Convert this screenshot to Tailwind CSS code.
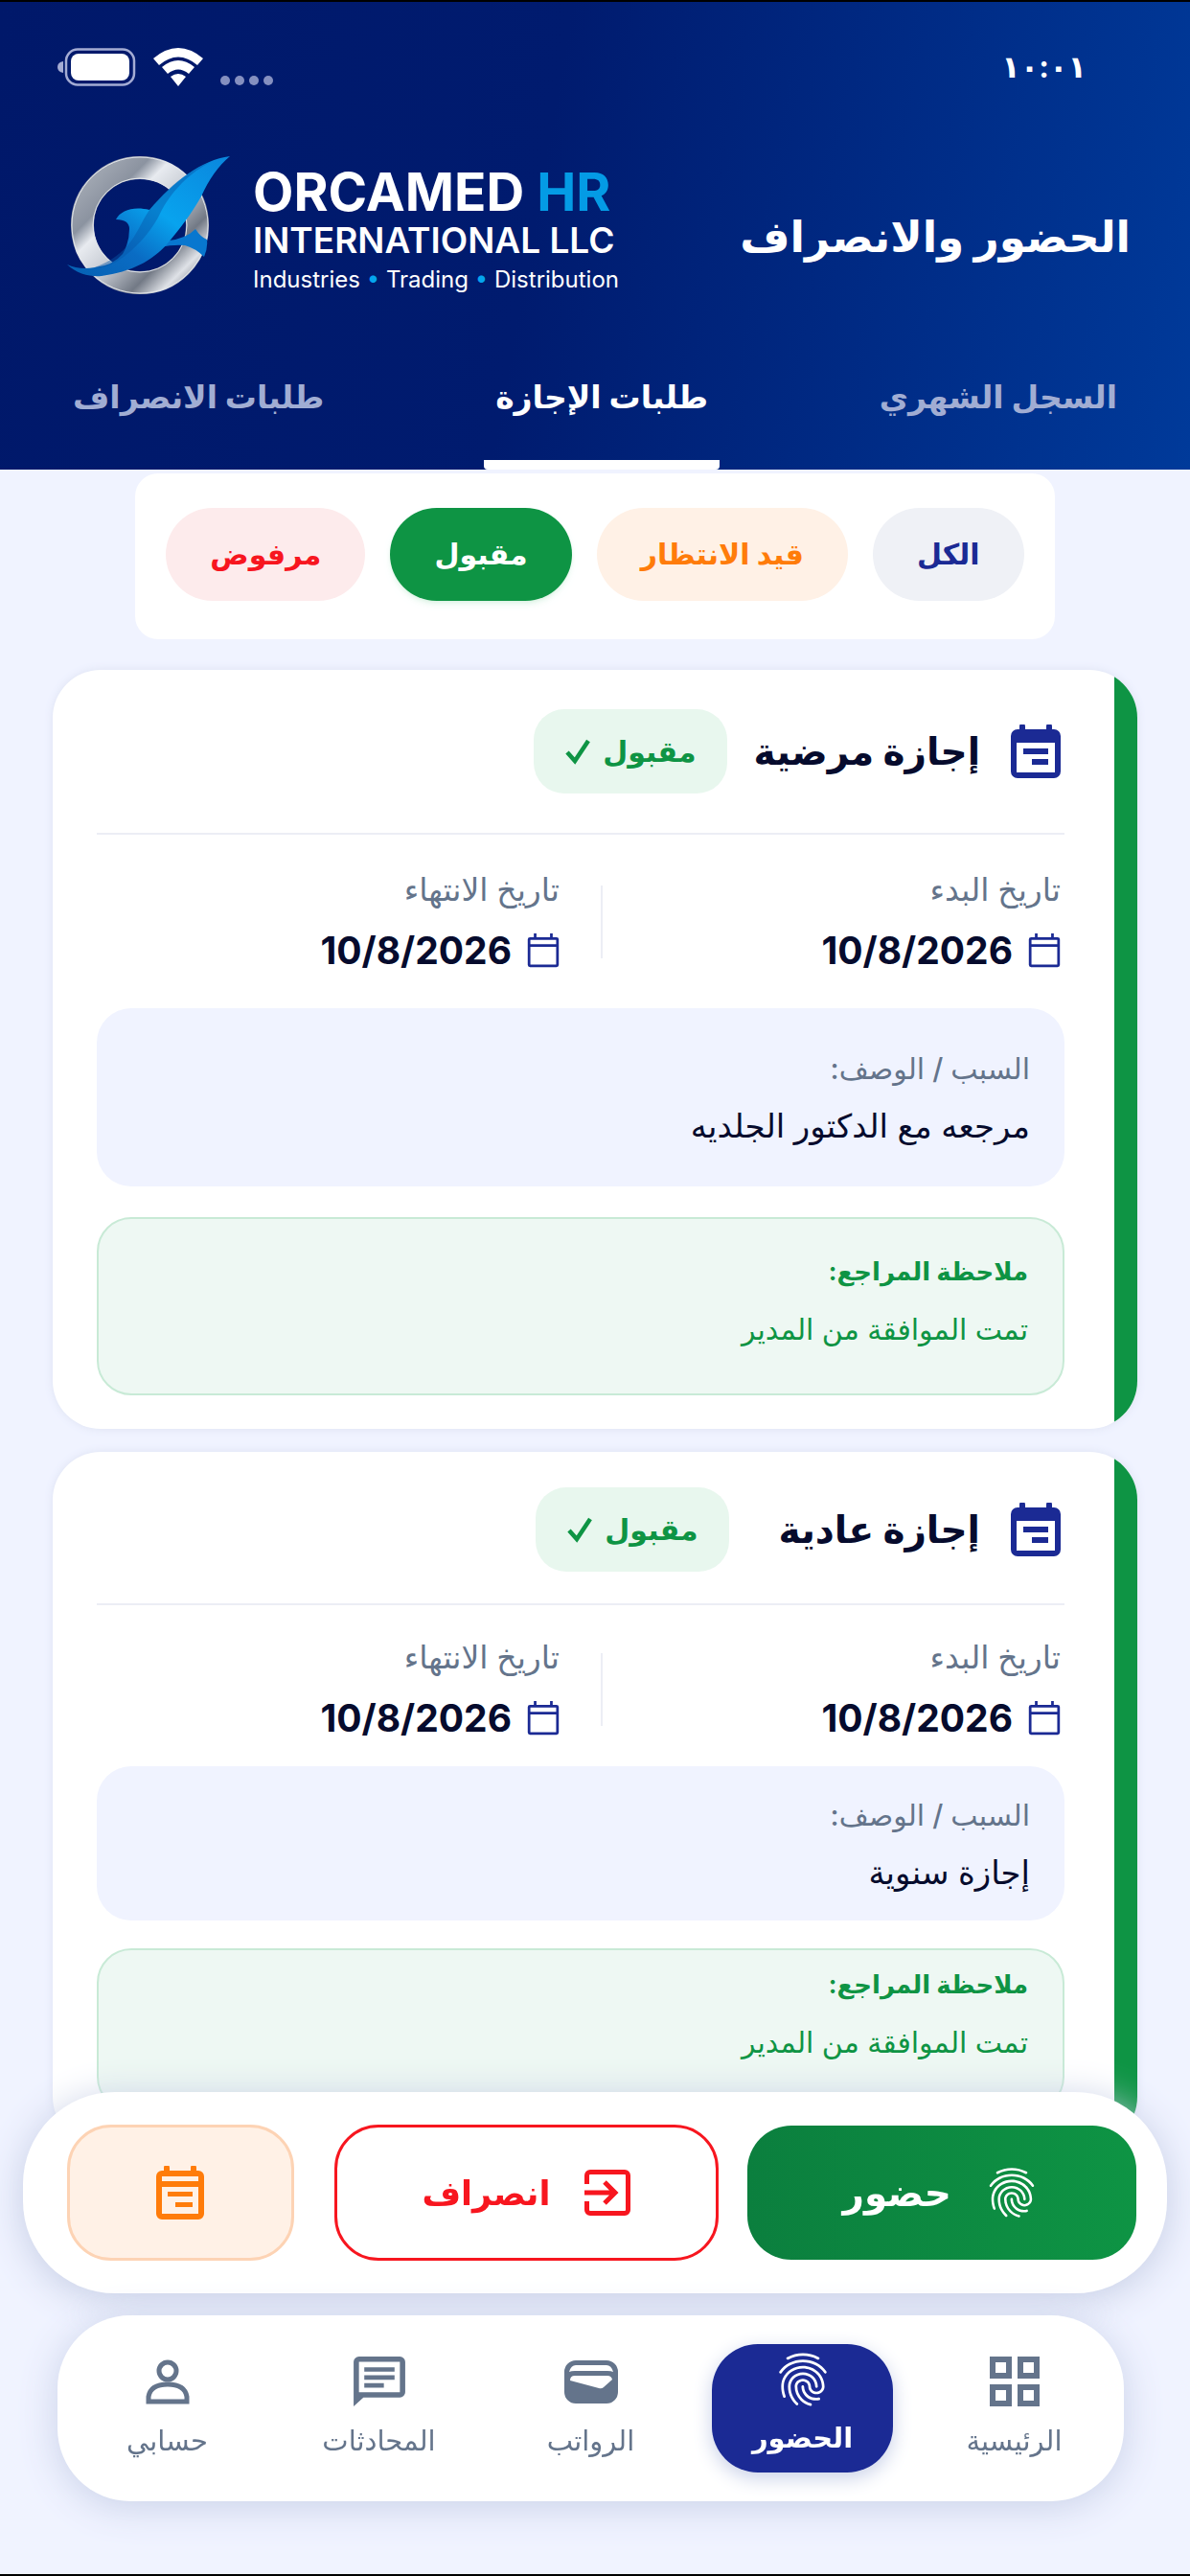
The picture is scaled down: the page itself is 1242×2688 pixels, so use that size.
<!DOCTYPE html>
<html lang="ar" dir="rtl">
<head>
  <meta charset="UTF-8">
  <meta name="viewport" content="width=device-width, initial-scale=1.0">
  <title>الحضور والانصراف</title>
  <script src="https://cdn.jsdelivr.net/npm/@tailwindcss/browser@4"></script>
</head>
<body class="min-h-screen bg-[#f0f3ff] font-['Inter','DejaVu_Sans',sans-serif] text-[#060b2d] border-y-2 border-black">

  <!-- Shared icons -->
  <svg class="hidden">
    <symbol id="finger" viewBox="0 0 24 24"><path d="M17.81 4.47c-.08 0-.16-.02-.23-.06C15.66 3.42 14 3 12.01 3c-1.98 0-3.86.47-5.57 1.41-.24.13-.54.04-.68-.2-.13-.24-.04-.55.2-.68C7.82 2.52 9.86 2 12.01 2c2.13 0 3.99.47 6.03 1.52.25.13.34.43.21.67-.09.18-.26.28-.44.28zM3.5 9.72c-.1 0-.2-.03-.29-.09-.23-.16-.28-.47-.12-.7.99-1.4 2.25-2.5 3.75-3.27C9.98 4.04 14 4.03 17.15 5.65c1.5.77 2.76 1.86 3.75 3.25.16.22.11.54-.12.7-.23.16-.54.11-.7-.12-.9-1.26-2.04-2.25-3.39-2.94-2.87-1.47-6.54-1.47-9.4.01-1.36.7-2.5 1.7-3.4 2.96-.08.14-.23.21-.39.21zm6.25 12.07c-.13 0-.26-.05-.35-.15-.87-.87-1.34-1.43-2.01-2.64-.69-1.23-1.05-2.73-1.05-4.34 0-2.97 2.54-5.39 5.66-5.39s5.66 2.42 5.66 5.39c0 .28-.22.5-.5.5s-.5-.22-.5-.5c0-2.42-2.09-4.39-4.66-4.39-2.57 0-4.66 1.97-4.66 4.39 0 1.44.32 2.77.93 3.85.64 1.15 1.08 1.64 1.85 2.42.19.2.19.51 0 .71-.11.1-.24.15-.37.15zm7.17-1.85c-1.19 0-2.24-.3-3.1-.89-1.49-1.01-2.38-2.65-2.38-4.39 0-.28.22-.5.5-.5s.5.22.5.5c0 1.41.72 2.74 1.94 3.56.71.48 1.54.71 2.54.71.24 0 .64-.03 1.04-.1.27-.05.53.13.58.41.05.27-.13.53-.41.58-.57.11-1.07.12-1.21.12zM14.91 22c-.04 0-.09-.01-.13-.02-1.59-.44-2.63-1.03-3.72-2.1-1.4-1.39-2.17-3.24-2.17-5.22 0-1.62 1.38-2.94 3.08-2.94 1.7 0 3.08 1.32 3.08 2.94 0 1.07.93 1.94 2.08 1.94s2.08-.87 2.08-1.94c0-3.77-3.25-6.83-7.25-6.83-2.84 0-5.44 1.58-6.61 4.03-.39.81-.59 1.76-.59 2.8 0 .78.07 2.01.67 3.61.1.26-.03.55-.29.64-.26.1-.55-.04-.64-.29-.49-1.31-.73-2.61-.73-3.96 0-1.2.23-2.29.68-3.24 1.33-2.79 4.28-4.6 7.51-4.6 4.55 0 8.25 3.51 8.25 7.83 0 1.62-1.38 2.94-3.08 2.94s-3.08-1.32-3.08-2.94c0-1.07-.93-1.94-2.08-1.94s-2.08.87-2.08 1.94c0 1.71.66 3.31 1.87 4.51.95.94 1.86 1.46 3.27 1.85.27.07.42.35.35.61-.05.23-.26.38-.47.38z"/></symbol>
    <symbol id="event" viewBox="0 0 52 56"><path fill-rule="evenodd" d="M9 2a3 3 0 0 1 6 0v3h22V2a3 3 0 0 1 6 0v3h2a7 7 0 0 1 7 7v37a7 7 0 0 1-7 7H7a7 7 0 0 1-7-7V12a7 7 0 0 1 7-7h2zM6 19v31h40V19zM13 25h26v6H13zM22 36h17v6H22z"/></symbol>
    <symbol id="cal" viewBox="0 0 32 34"><path d="M3 5h26a1 1 0 0 1 1 1v25a1 1 0 0 1-1 1H3a1 1 0 0 1-1-1V6a1 1 0 0 1 1-1zM2 12h28M8 0v5M24 0v5" fill="none" stroke="currentColor" stroke-width="2.6"/></symbol>
    <symbol id="check" viewBox="0 0 28 28"><path d="M3 15l8 9L25 3" fill="none" stroke="currentColor" stroke-width="4.500"/></symbol>
  </svg>

  <header class="bg-linear-[100deg,#00186a,#001b6f_45%,#003a9a] text-white">
    <div class="flex items-center justify-between h-[136px] pl-15 pr-27">
      <span class="text-[32px] font-bold">١٠:٠١</span>
      <div class="flex items-center gap-[18px]">
        <svg class="w-14 h-3 mt-7" viewBox="0 0 56 12" fill="#8590c0"><circle cx="5" cy="6" r="5"/><circle cx="20" cy="6" r="5"/><circle cx="35" cy="6" r="5"/><circle cx="50" cy="6" r="5"/></svg>
        <svg class="w-[52px] h-10" viewBox="0 0 52 40" fill="#fff"><path d="M0 11Q26-11 52 11l-6 7Q26 1 6 18zM9 20q17-14 34 0l-6 7q-11-9-22 0zM18 30q8-6 16 0l-8 10z"/></svg>
        <svg class="w-[82px] h-10" viewBox="0 0 82 40"><rect x="9" y="1.500" width="71" height="37" rx="12" fill="none" stroke="#a4acd4" stroke-width="2.500"/><rect x="14" y="6" width="61" height="28" rx="8" fill="#fff"/><path d="M6 14v12q-6-1-6-6t6-6z" fill="#a4acd4"/></svg>
      </div>
    </div>

    <div class="flex items-center justify-between mt-5 pl-[70px] pr-[62px]">
      <h1 class="mt-6 text-[45px] leading-16 font-bold">الحضور والانصراف</h1>
      <div class="flex items-center gap-6" dir="ltr">
        <svg class="w-[170px] h-[152px]" viewBox="0 0 170 152">
          <defs>
            <linearGradient id="metal" x1="0" y1="0" x2="1" y2="1"><stop offset="0" stop-color="#a9afb9"/><stop offset=".25" stop-color="#8b93a0"/><stop offset=".35" stop-color="#e8ebf0"/><stop offset=".55" stop-color="#c3c8d0"/><stop offset=".75" stop-color="#727985"/><stop offset=".88" stop-color="#dfe2e7"/><stop offset="1" stop-color="#80868f"/></linearGradient>
            <linearGradient id="fish" x1="1" y1="0" x2="0" y2="1"><stop offset="0" stop-color="#0a86dd"/><stop offset=".45" stop-color="#08a3ee"/><stop offset=".7" stop-color="#0a6cc4"/><stop offset="1" stop-color="#0560b2"/></linearGradient>
          </defs>
          <circle cx="76" cy="76" r="60" fill="none" stroke="url(#metal)" stroke-width="24"/>
          <circle cx="76" cy="76" r="71" fill="none" stroke="#e3e6eb" stroke-width="1"/>
          <circle cx="76" cy="76" r="49" fill="none" stroke="#e3e6eb" stroke-width="1"/>
          <path d="M106 92q18-2 28-12 5 8 12 11 1 9-3 18-9-9-20-12-12-1-26 2z" fill="#0877cf"/>
          <path d="M170 4C140 8 112 30 86 60 70 56 56 60 51 70q14 0 14 10 0 14-7 26-10 12-29 14-16 3-29-3C10 127 25 130 36 129 70 124 92 112 109 90 124 72 132 60 140 46 148 28 158 14 170 4z" fill="url(#fish)"/>
          <path d="M86 60C72 80 70 104 29 120 50 124 84 90 96 66 108 40 130 20 150 10 124 20 104 38 86 60z" fill="#0756a8" opacity=".45"/>
        </svg>
        <div class="flex flex-col pt-3">
          <span class="text-[55px] leading-[60px] font-bold">ORCAMED <span class="text-[#049be5]">HR</span></span>
          <span class="text-[37px] leading-[42px] font-semibold">INTERNATIONAL LLC</span>
          <span class="text-[24px] leading-10">Industries <span class="text-[#04a5ee]">•</span> Trading <span class="text-[#04a5ee]">•</span> Distribution</span>
        </div>
      </div>
    </div>

    <nav class="flex justify-between mt-[34px] px-[76px] text-[33px] leading-12 font-bold text-[#a1add3]">
      <a href="#" class="h-[144px] pt-11">السجل الشهري</a>
      <a href="#" class="h-[144px] pt-11 px-3 text-white border-b-10 border-white rounded-b-sm">طلبات الإجازة</a>
      <a href="#" class="h-[144px] pt-11">طلبات الانصراف</a>
    </nav>
  </header>

  <main class="flex flex-col items-center pt-1 px-[55px] pb-6">
    <div class="flex gap-[26px] bg-white rounded-3xl px-8 pt-9 pb-10 text-[30px] font-bold">
      <button class="h-[97px] px-[46px] rounded-full bg-[#eff1f6] text-[#1b2a94]">الكل</button>
      <button class="h-[97px] px-[46px] rounded-full bg-[#fff1e6] text-[#ff7c0a]">قيد الانتظار</button>
      <button class="h-[97px] px-[46px] rounded-full bg-[#0e9444] text-white shadow-md shadow-green-600/10">مقبول</button>
      <button class="h-[97px] px-[46px] rounded-full bg-[#fdebec] text-[#f7161f]">مرفوض</button>
    </div>

    <!-- Sick leave -->
    <article class="flex w-full mt-8 bg-white rounded-[50px] overflow-hidden shadow-[0_0_10px_#dde2f2]">
      <div class="w-6 bg-[#0e9444]"></div>
      <div class="flex-1 pl-[46px] pr-[52px] pb-[35px]">
        <div class="flex items-center h-[172px] border-b-2 border-[#eceef5]">
          <svg class="w-[52px] h-14 mr-1 text-[#1b2a94]" fill="currentColor"><use href="#event"/></svg>
          <h2 class="mr-8 text-[39px] font-bold">إجازة مرضية</h2>
          <span class="flex items-center gap-3 h-[88px] mr-7 px-8 rounded-[32px] bg-[#e8f7ee] text-[30px] font-bold text-[#0e9444]">مقبول <svg class="w-7 h-7"><use href="#check"/></svg></span>
        </div>
        <div class="flex items-center h-[181px] pr-1">
          <div class="w-[478px] flex flex-col gap-5">
            <span class="text-[33px] leading-10 text-[#64748b] font-medium">تاريخ البدء</span>
            <span class="flex items-center gap-4 text-[39px] leading-12 font-bold"><svg class="w-[34px] h-9 text-[#1b2a94]"><use href="#cal"/></svg>10/8/2026</span>
          </div>
          <div class="w-[45px] h-[76px] border-r-2 border-[#eceef5]"></div>
          <div class="flex flex-col gap-5">
            <span class="text-[33px] leading-10 text-[#64748b] font-medium">تاريخ الانتهاء</span>
            <span class="flex items-center gap-4 text-[39px] leading-12 font-bold"><svg class="w-[34px] h-9 text-[#1b2a94]"><use href="#cal"/></svg>10/8/2026</span>
          </div>
        </div>
        <div class="flex flex-col justify-center gap-3 h-[186px] px-9 rounded-[36px] bg-[#f0f3ff]">
          <p class="text-[30px] leading-12 text-[#64748b] font-medium">السبب / الوصف:</p>
          <p class="text-[34px] leading-12">مرجعه مع الدكتور الجلديه</p>
        </div>
        <div class="flex flex-col justify-center gap-3 h-[186px] mt-8 px-9 pb-3 rounded-[36px] border-2 border-[#c8ead6] bg-[#eef8f3] text-[#0e9444]">
          <p class="text-[26px] leading-12 font-bold">ملاحظة المراجع:</p>
          <p class="text-[30px] leading-12">تمت الموافقة من المدير</p>
        </div>
      </div>
    </article>

    <!-- Regular leave -->
    <article class="flex w-full mt-6 bg-white rounded-[50px] overflow-hidden shadow-[0_0_10px_#dde2f2]">
      <div class="w-6 bg-[#0e9444]"></div>
      <div class="flex-1 pl-[46px] pr-[52px] pb-[35px]">
        <div class="flex items-center h-[160px] pt-1 border-b-2 border-[#eceef5]">
          <svg class="w-[52px] h-14 mr-1 text-[#1b2a94]" fill="currentColor"><use href="#event"/></svg>
          <h2 class="mr-8 text-[39px] font-bold">إجازة عادية</h2>
          <span class="flex items-center gap-3 h-[88px] mr-13 px-8 rounded-[32px] bg-[#e8f7ee] text-[30px] font-bold text-[#0e9444]">مقبول <svg class="w-7 h-7"><use href="#check"/></svg></span>
        </div>
        <div class="flex items-center h-[168px] pt-2 pr-1">
          <div class="w-[478px] flex flex-col gap-5">
            <span class="text-[33px] leading-10 text-[#64748b] font-medium">تاريخ البدء</span>
            <span class="flex items-center gap-4 text-[39px] leading-12 font-bold"><svg class="w-[34px] h-9 text-[#1b2a94]"><use href="#cal"/></svg>10/8/2026</span>
          </div>
          <div class="w-[45px] h-[76px] border-r-2 border-[#eceef5]"></div>
          <div class="flex flex-col gap-5">
            <span class="text-[33px] leading-10 text-[#64748b] font-medium">تاريخ الانتهاء</span>
            <span class="flex items-center gap-4 text-[39px] leading-12 font-bold"><svg class="w-[34px] h-9 text-[#1b2a94]"><use href="#cal"/></svg>10/8/2026</span>
          </div>
        </div>
        <div class="flex flex-col justify-center gap-3 h-[161px] px-9 rounded-[36px] bg-[#f0f3ff]">
          <p class="text-[30px] leading-12 text-[#64748b] font-medium">السبب / الوصف:</p>
          <p class="text-[34px] leading-12">إجازة سنوية</p>
        </div>
        <div class="flex flex-col gap-3 h-[170px] mt-[29px] pt-3 px-9 rounded-[36px] border-2 border-[#c8ead6] bg-[#eef8f3] text-[#0e9444]">
          <p class="text-[26px] leading-12 font-bold">ملاحظة المراجع:</p>
          <p class="text-[30px] leading-12">تمت الموافقة من المدير</p>
        </div>
      </div>
    </article>
  </main>

  <div class="fixed bottom-0 inset-x-0 pb-[78px]">
    <div class="flex items-center mx-6 h-[210px] pr-8 pl-[46px] rounded-[96px] bg-white shadow-[0_6px_40px_#c5cde4]">
      <button class="flex flex-[410] items-center justify-center gap-8 h-[140px] rounded-[46px] bg-linear-to-r from-[#0b7f3e] to-[#0e9444] text-[39px] font-bold text-white">
        <svg class="w-[62px] h-[64px]" fill="currentColor"><use href="#finger"/></svg>حضور
      </button>
      <button class="flex flex-[400] items-center justify-center gap-9 h-[142px] mr-[30px] rounded-[46px] border-3 border-[#f7161f] text-[35px] font-bold text-[#f7161f]">
        <svg class="w-12 h-12" viewBox="0 0 48 48" fill="none" stroke="currentColor" stroke-width="5"><path d="M2.500 15V6a3.500 3.500 0 0 1 3.500-3.500h36a3.500 3.500 0 0 1 3.500 3.500v36a3.500 3.500 0 0 1-3.500 3.500H6a3.500 3.500 0 0 1-3.500-3.500V33M0 24h31M21 13l11 11-11 11"/></svg>انصراف
      </button>
      <button aria-label="طلب إجازة" class="flex flex-[233] items-center justify-center h-[142px] mr-[42px] rounded-[46px] border-3 border-[#fdd3b4] bg-[#fff1e6] text-[#ff7c0a]">
        <svg class="w-[50px] h-14" viewBox="0 0 50 56" fill="currentColor"><path fill-rule="evenodd" d="M8 2a3 3 0 0 1 6 0v3h22V2a3 3 0 0 1 6 0v3h2a6 6 0 0 1 6 6v39a6 6 0 0 1-6 6H6a6 6 0 0 1-6-6V11a6 6 0 0 1 6-6h2zM6 11v5h38v-5zM6 22v28h38V22zM12 27h26v5H12zM20 38h18v5H20z"/></svg>
      </button>
    </div>

    <nav class="grid grid-cols-5 items-center mt-[23px] mr-[69px] ml-15 h-[194px] px-1 rounded-[76px] bg-white text-[29px] leading-8 font-medium text-[#64748b] shadow-[0_6px_40px_#c9d1e8]">
      <a href="#" class="flex flex-col items-center gap-5 pb-1">
        <svg class="w-[52px] h-[52px]" viewBox="0 0 52 52" fill="none" stroke="currentColor" stroke-width="6"><path d="M3 3h17v17H3zM32 3h17v17H32zM3 32h17v17H3zM32 32h17v17H32z"/></svg>الرئيسية
      </a>
      <a href="#" class="flex flex-col items-center gap-3 mx-4 pt-1 pb-5 rounded-[48px] bg-[#1b2a94] font-bold text-white shadow-[0_6px_20px_#c9d1e8]">
        <svg class="w-[66px] h-[66px]" fill="currentColor"><use href="#finger"/></svg>الحضور
      </a>
      <a href="#" class="flex flex-col items-center gap-5 pb-1">
        <svg class="w-[58px] h-[52px]" viewBox="0 0 58 52" fill="currentColor"><path fill-rule="evenodd" d="M13 4h32a12 12 0 0 1 12 12v21a12 12 0 0 1-12 12H13A12 12 0 0 1 1 37V16A12 12 0 0 1 13 4zM6 16q2-1 6-1h34q4 0 6 1-2-7-7-7H13q-5 0-7 7zM7 25l30 8q3 1 5-1l9-8q-1-4-5-4H12q-5 0-5 5z"/></svg>الرواتب
      </a>
      <a href="#" class="flex flex-col items-center gap-5 pb-1">
        <svg class="w-[58px] h-[52px]" viewBox="0 0 58 56" fill="currentColor"><path fill-rule="evenodd" d="M6 0h46a6 6 0 0 1 6 6v34a6 6 0 0 1-6 6H11L0 56V6a6 6 0 0 1 6-6zM6 6v34h46V6zM12 12h34v5H12zM12 21h34v5H12zM12 30h22v5H12z"/></svg>المحادثات
      </a>
      <a href="#" class="flex flex-col items-center gap-5 pb-1">
        <svg class="w-[46px] h-[52px]" viewBox="0 0 46 52" fill="none" stroke="currentColor" stroke-width="5"><circle cx="23" cy="15" r="9"/><path d="M3 47v-5q2-13 20-13t20 13v5z"/></svg>حسابي
      </a>
    </nav>
  </div>
</body>
</html>
